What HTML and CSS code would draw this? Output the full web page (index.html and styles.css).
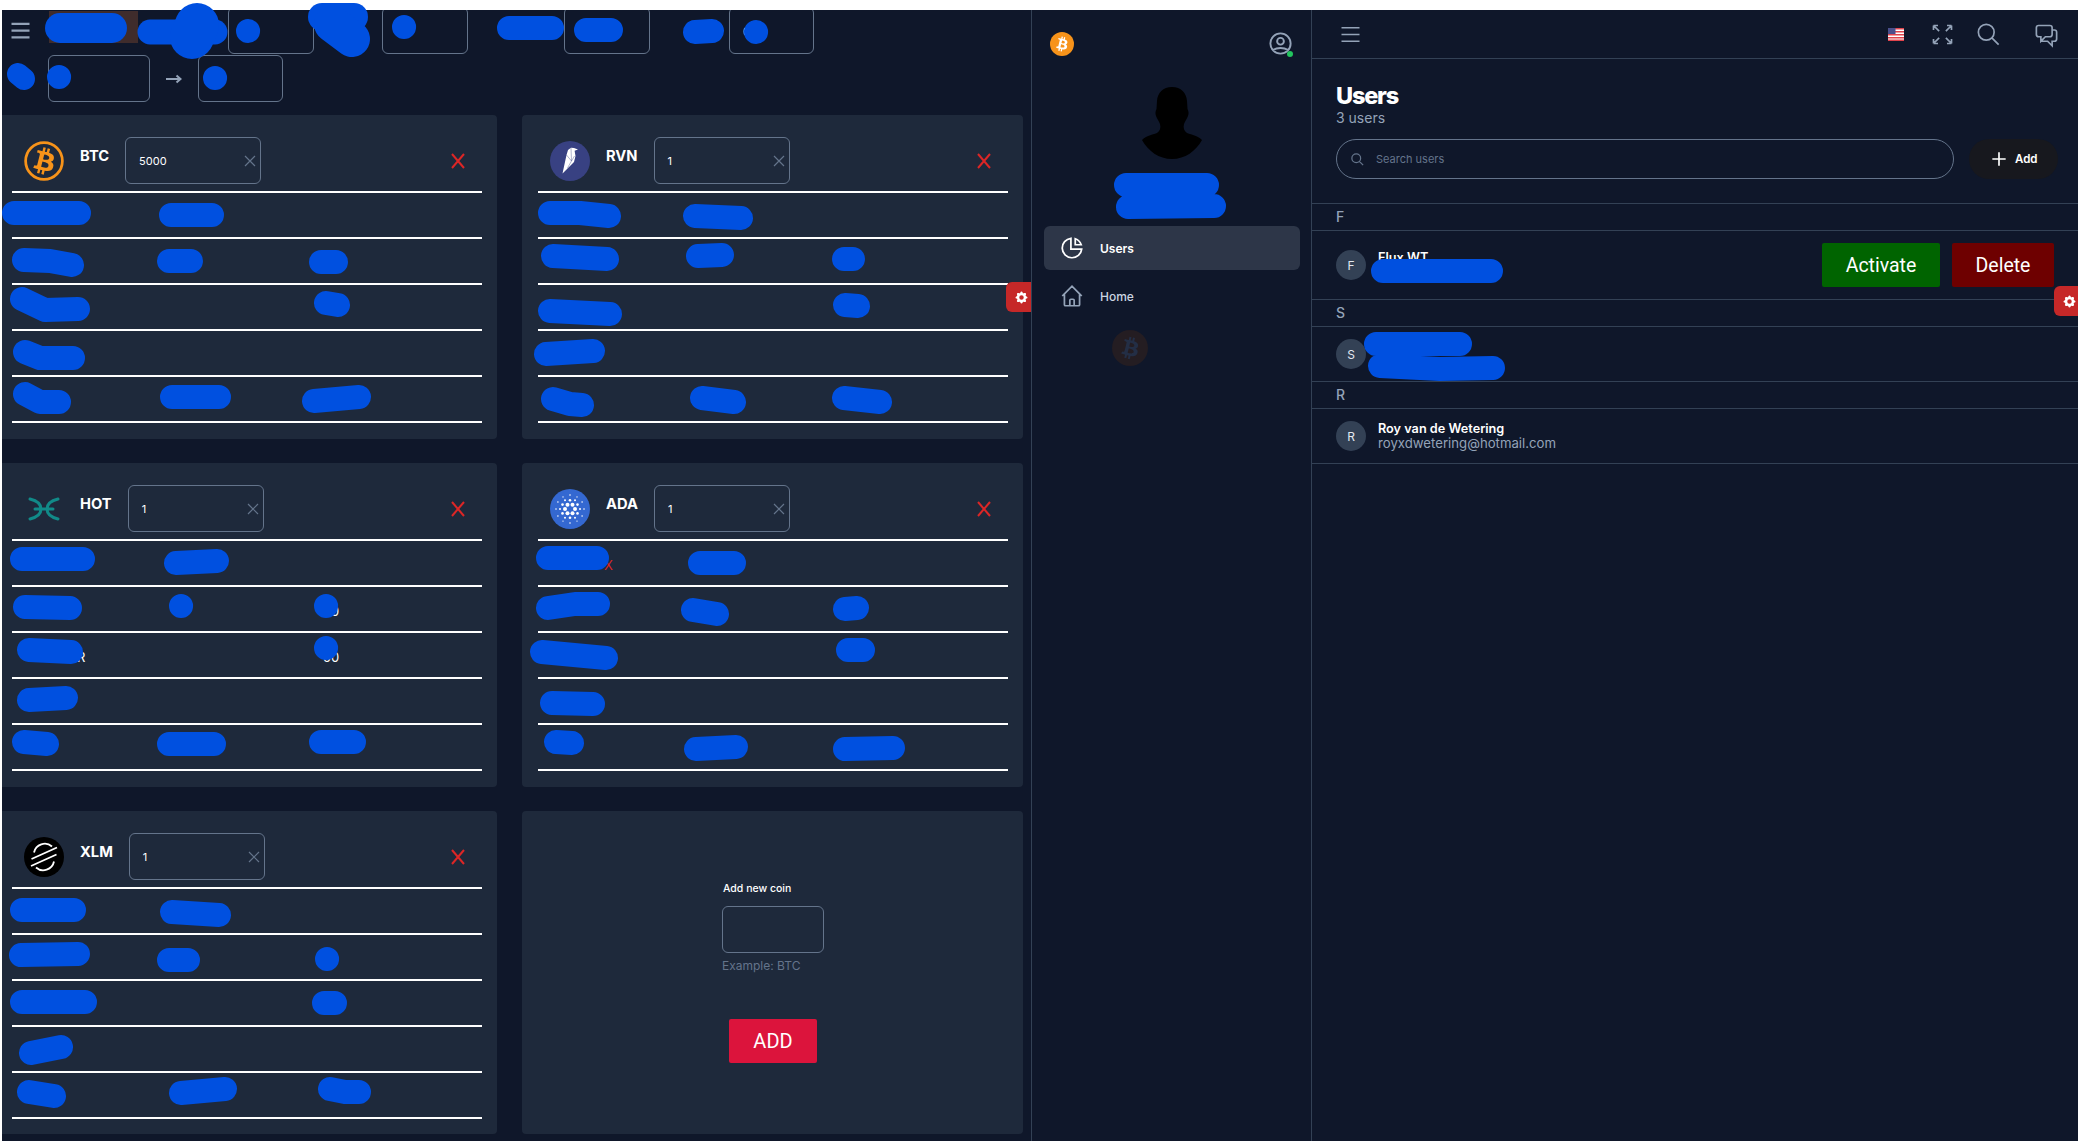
FILE: index.html
```html
<!DOCTYPE html>
<html lang="en">
<head>
    <meta charset="UTF-8">
    <meta name="viewport" content="width=device-width, initial-scale=1.0">
    <title>Users</title>
    <link rel="stylesheet" href="styles.css">
</head>
<body>
    <svg class="sprite" width="0" height="0">
        <symbol id="i-btc" viewBox="0 0 32 32"><path d="M23.189 14.02c.314-2.096-1.283-3.223-3.465-3.975l.708-2.84-1.728-.43-.69 2.765c-.454-.114-.92-.22-1.385-.326l.695-2.783L15.596 6l-.708 2.839c-.376-.086-.746-.17-1.104-.26l.002-.009-2.384-.595-.46 1.846s1.283.294 1.256.312c.7.175.826.638.805 1.006l-.806 3.235c.048.012.11.03.18.057l-.183-.045-1.13 4.532c-.086.212-.303.531-.793.41.018.025-1.256-.313-1.256-.313l-.858 1.978 2.25.561c.418.105.828.215 1.231.318l-.715 2.872 1.727.43.708-2.84c.472.127.93.245 1.378.357l-.706 2.828 1.728.43.715-2.866c2.948.558 5.164.333 6.097-2.333.752-2.146-.037-3.385-1.588-4.192 1.13-.26 1.98-1.003 2.207-2.538zm-3.95 5.538c-.533 2.147-4.148.986-5.32.695l.95-3.805c1.172.293 4.929.872 4.37 3.11zm.535-5.569c-.487 1.953-3.495.96-4.47.717l.86-3.45c.975.243 4.118.696 3.61 2.733z"/></symbol>
        <symbol id="i-gear" viewBox="0 0 20 20"><path fill-rule="evenodd" d="M11.49 3.17c-.38-1.56-2.6-1.56-2.98 0a1.532 1.532 0 01-2.286.948c-1.372-.836-2.942.734-2.106 2.106.54.886.061 2.042-.947 2.287-1.561.379-1.561 2.6 0 2.978a1.532 1.532 0 01.947 2.287c-.836 1.372.734 2.942 2.106 2.106a1.532 1.532 0 012.287.947c.379 1.561 2.6 1.561 2.978 0a1.533 1.533 0 012.287-.947c1.372.836 2.942-.734 2.106-2.106a1.533 1.533 0 01.947-2.287c1.561-.379 1.561-2.6 0-2.978a1.532 1.532 0 01-.947-2.287c.836-1.372-.734-2.942-2.106-2.106a1.532 1.532 0 01-2.287-.947zM10 13a3 3 0 100-6 3 3 0 000 6z"/></symbol>
        <symbol id="i-menu" viewBox="0 0 24 24"><path d="M4 6h16M4 12h16M4 18h16"/></symbol>
        <symbol id="i-clear" viewBox="0 0 12 12"><path d="M1 1l10 10M11 1L1 11"/></symbol>
        <symbol id="i-remove" viewBox="0 0 16 16"><path d="M2 1l12 14M14 1L2 15"/></symbol>
        <symbol id="i-search" viewBox="0 0 24 24"><path d="M21 21l-6-6m2-5a7 7 0 11-14 0 7 7 0 0114 0z"/></symbol>
    </svg>

    <div class="screen">
        <!-- coin alerts panel -->
        <section class="coins-panel">
            <div class="filters">
                <div class="filter-row">
                    <svg class="menu-icon"><use href="#i-menu"/></svg>
                    <span></span>
                    <div class="filter-active"></div>
                    <span></span>
                    <div class="field"></div>
                    <span></span>
                    <div class="field"></div>
                    <span></span>
                    <div class="field"></div>
                    <span></span>
                    <div class="field"><span class="field-peek">0</span></div>
                </div>
                <div class="filter-range">
                    <span class="range-label"></span>
                    <div class="field range-from"></div>
                    <svg class="range-arrow" viewBox="0 0 16 10"><path d="M0 5h14M10.5 1.5L14.5 5l-4 3.5"/></svg>
                    <div class="field range-to"></div>
                </div>
            </div>

            <div class="coin-grid">
                <article class="coin-card">
                    <header class="coin-head">
                        <svg class="coin-icon icon-btc" viewBox="0 0 32 32"><circle cx="16" cy="16" r="14.700"/><use href="#i-btc" transform="translate(-1.600 -1.600) scale(1.100)"/></svg>
                        <h3>BTC</h3>
                        <div class="amount"><span>5000</span><svg class="clear"><use href="#i-clear"/></svg></div>
                        <svg class="remove"><use href="#i-remove"/></svg>
                    </header>
                    <div class="coin-row"></div>
                    <div class="coin-row"></div>
                    <div class="coin-row"></div>
                    <div class="coin-row"></div>
                    <div class="coin-row"></div>
                </article>

                <article class="coin-card">
                    <header class="coin-head">
                        <svg class="coin-icon" viewBox="0 0 40 40">
                            <circle cx="20" cy="20" r="20" fill="#384182"/>
                            <path fill="#fff" d="M12.5 32.5L16.5 14l1.5-5 3-2.2 3 .2 4 1.4-3.4 1.4.9 5.2-1.5 6-6 6z"/>
                            <path fill="none" stroke="#384182" stroke-width=".4" d="M16.5 14l5 6-4 7M21 7l.5 13 3-5"/>
                        </svg>
                        <h3>RVN</h3>
                        <div class="amount"><span>1</span><svg class="clear"><use href="#i-clear"/></svg></div>
                        <svg class="remove"><use href="#i-remove"/></svg>
                    </header>
                    <div class="coin-row"></div>
                    <div class="coin-row"></div>
                    <div class="coin-row"></div>
                    <div class="coin-row"></div>
                    <div class="coin-row"></div>
                </article>

                <article class="coin-card">
                    <header class="coin-head">
                        <svg class="coin-icon icon-hot" viewBox="0 0 40 40"><path d="M6 10c8 2 11 6 11 10s-3 8-11 10M34 10c-8 2-11 6-11 10s3 8 11 10M11 20h18"/></svg>
                        <h3>HOT</h3>
                        <div class="amount"><span>1</span><svg class="clear"><use href="#i-clear"/></svg></div>
                        <svg class="remove"><use href="#i-remove"/></svg>
                    </header>
                    <div class="coin-row"></div>
                    <div class="coin-row"><span class="peek peek-three">0</span></div>
                    <div class="coin-row"><span class="peek peek-one">R</span><span class="peek peek-three-wide">50</span></div>
                    <div class="coin-row"></div>
                    <div class="coin-row"></div>
                </article>

                <article class="coin-card">
                    <header class="coin-head">
                        <svg class="coin-icon icon-ada" viewBox="0 0 40 40">
                            <circle class="ada-disc" cx="20" cy="20" r="20"/>
                            <g class="ada-big"><circle cx="25" cy="20" r="2"/><circle cx="22.5" cy="24.3" r="2"/><circle cx="17.5" cy="24.3" r="2"/><circle cx="15" cy="20" r="2"/><circle cx="17.5" cy="15.7" r="2"/><circle cx="22.5" cy="15.7" r="2"/></g>
                            <g class="ada-mid"><circle cx="27.5" cy="15.6" r="1.3"/><circle cx="27.5" cy="24.4" r="1.3"/><circle cx="12.5" cy="15.6" r="1.3"/><circle cx="12.5" cy="24.4" r="1.3"/><circle cx="20" cy="11.3" r="1.3"/><circle cx="20" cy="28.7" r="1.3"/></g>
                            <g class="ada-small"><circle cx="30" cy="20" r="1"/><circle cx="25" cy="28.7" r="1"/><circle cx="15" cy="28.7" r="1"/><circle cx="10" cy="20" r="1"/><circle cx="15" cy="11.3" r="1"/><circle cx="25" cy="11.3" r="1"/><circle cx="34" cy="20" r=".8"/><circle cx="6" cy="20" r=".8"/><circle cx="32.1" cy="13" r=".8"/><circle cx="32.1" cy="27" r=".8"/><circle cx="7.9" cy="13" r=".8"/><circle cx="7.9" cy="27" r=".8"/><circle cx="20" cy="6" r=".8"/><circle cx="20" cy="34" r=".8"/><circle cx="27" cy="7.9" r=".7"/><circle cx="13" cy="7.9" r=".7"/><circle cx="27" cy="32.1" r=".7"/><circle cx="13" cy="32.1" r=".7"/></g>
                        </svg>
                        <h3>ADA</h3>
                        <div class="amount"><span>1</span><svg class="clear"><use href="#i-clear"/></svg></div>
                        <svg class="remove"><use href="#i-remove"/></svg>
                    </header>
                    <div class="coin-row"><span class="peek peek-one peek-red">X</span></div>
                    <div class="coin-row"></div>
                    <div class="coin-row"></div>
                    <div class="coin-row"></div>
                    <div class="coin-row"></div>
                </article>

                <article class="coin-card">
                    <header class="coin-head">
                        <svg class="coin-icon icon-xlm" viewBox="0 0 40 40">
                            <circle class="xlm-disc" cx="20" cy="20" r="20"/>
                            <path d="M10 15.500a11 11 0 0 1 18-6M30 24.500a11 11 0 0 1-18 6M7.500 22L33 10.500M7 29l25.500-11.500"/>
                        </svg>
                        <h3>XLM</h3>
                        <div class="amount"><span>1</span><svg class="clear"><use href="#i-clear"/></svg></div>
                        <svg class="remove"><use href="#i-remove"/></svg>
                    </header>
                    <div class="coin-row"></div>
                    <div class="coin-row"></div>
                    <div class="coin-row"></div>
                    <div class="coin-row"></div>
                    <div class="coin-row"></div>
                </article>

                <article class="coin-card add-card">
                    <label class="add-label">Add new coin</label>
                    <div class="field add-field"></div>
                    <p class="add-hint">Example: BTC</p>
                    <button class="add-button">ADD</button>
                </article>
            </div>

            <button class="gear-tab"><svg><use href="#i-gear"/></svg></button>
        </section>

        <!-- sidebar -->
        <aside class="sidebar">
            <div class="side-top">
                <svg class="side-logo" viewBox="0 0 32 32"><circle cx="16" cy="16" r="16"/><use href="#i-btc"/></svg>
                <div class="side-account">
                    <svg viewBox="0 0 24 24"><path d="M5.121 17.804A13.937 13.937 0 0112 16c2.5 0 4.847.655 6.879 1.804M15 10a3 3 0 11-6 0 3 3 0 016 0zm6 2a9 9 0 11-18 0 9 9 0 0118 0z"/></svg>
                    <span class="online-dot"></span>
                </div>
            </div>
            <svg class="side-avatar" viewBox="0 0 60 72"><path d="M30 0c9 0 14.500 6 15 14l.5 8c1 2 1.500 4 .5 7-1 3-3 5-4 8-1 4 0 7 3 9 3 1.500 10 2 15 7-6 11-17 19-30 19S6 64 0 53c5-5 12-5.500 15-7 3-2 4-5 3-9-1-3-3-5-4-8-1-3-.5-5 .5-7l.5-8C15.500 6 21 0 30 0z"/></svg>
            <nav class="side-nav">
                <a class="side-link active" href="#">
                    <svg viewBox="0 0 24 24"><path d="M11 3.055A9.001 9.001 0 1020.945 13H11V3.055z"/><path d="M20.488 9H15V3.512A9.025 9.025 0 0120.488 9z"/></svg>
                    Users
                </a>
                <a class="side-link" href="#">
                    <svg viewBox="0 0 24 24"><path d="M3 12l2-2m0 0l7-7 7 7M5 10v10a1 1 0 001 1h3m10-11l2 2m-2-2v10a1 1 0 01-1 1h-3m-6 0a1 1 0 001-1v-4a1 1 0 011-1h2a1 1 0 011 1v4a1 1 0 001 1m-6 0h6"/></svg>
                    Home
                </a>
            </nav>
            <svg class="side-coin" viewBox="0 0 32 32"><circle cx="16" cy="16" r="16"/><use href="#i-btc"/></svg>
        </aside>

        <!-- users list -->
        <main class="users">
            <header class="topbar">
                <svg class="top-menu"><use href="#i-menu"/></svg>
                <div class="top-icons">
                    <span class="top-icon">
                        <svg class="flag" viewBox="0 0 16 13">
                            <rect width="16" height="13" fill="#fff"/>
                            <path fill="#e0434b" d="M0 0h16v1.500H0zM0 3h16v1.500H0zM0 6h16v1.500H0zM0 9h16v1.500H0zM0 11.500h16V13H0z"/>
                            <rect width="7.500" height="6" fill="#4a4f8c"/>
                        </svg>
                    </span>
                    <span class="top-icon"><svg viewBox="0 0 24 24"><path d="M4 8V4m0 0h4M4 4l5 5m11-1V4m0 0h-4m4 0l-5 5M4 16v4m0 0h4m-4 0l5-5m11 5l-5-5m5 5v-4m0 4h-4"/></svg></span>
                    <span class="top-icon"><svg><use href="#i-search"/></svg></span>
                    <span class="top-icon top-chat"><svg viewBox="0 0 24 24"><path d="M17 8h2a2 2 0 012 2v6a2 2 0 01-2 2h-2v4l-4-4H9a1.994 1.994 0 01-1.414-.586m0 0L11 14h4a2 2 0 002-2V6a2 2 0 00-2-2H5a2 2 0 00-2 2v6a2 2 0 002 2h2v4l.586-.586z"/></svg></span>
                </div>
            </header>

            <div class="users-head">
                <h1>Users</h1>
                <p>3 users</p>
                <div class="users-tools">
                    <div class="user-search">
                        <svg><use href="#i-search"/></svg>
                        <span>Search users</span>
                    </div>
                    <button class="add-user">
                        <svg viewBox="0 0 24 24"><path d="M12 4v16m8-8H4"/></svg>
                        Add
                    </button>
                </div>
            </div>

            <div class="letter">F</div>
            <div class="user-row user-row-tall">
                <span class="initial">F</span>
                <div class="user-text">
                    <div class="user-name">Flux WT</div>
                    <div class="user-mail">&nbsp;</div>
                </div>
                <div class="user-actions">
                    <button class="btn btn-green">Activate</button>
                    <button class="btn btn-red">Delete</button>
                </div>
            </div>

            <div class="letter">S</div>
            <div class="user-row">
                <span class="initial">S</span>
            </div>

            <div class="letter">R</div>
            <div class="user-row user-row-last">
                <span class="initial">R</span>
                <div class="user-text">
                    <div class="user-name">Roy van de Wetering</div>
                    <div class="user-mail">royxdwetering@hotmail.com</div>
                </div>
            </div>

            <button class="gear-tab gear-tab-main"><svg><use href="#i-gear"/></svg></button>
        </main>
    </div>

    <!-- marker scribbles painted over the private values -->
    <svg class="scribbles" viewBox="0 0 2078 1141">
        <!-- top filters -->
        <path stroke-width="30" d="M60 28H112"/>
        <path stroke-width="25" d="M150 32H215"/>
        <path stroke-width="44" d="M197 25L192 37"/>
        <path stroke-width="24" d="M248 31h.1M404 27h.1M59 77h.1M215 78h.1M756 32h.1M509 28H552M586 30H611M695 32L712 31"/>
        <path stroke-width="28" d="M322 17H354"/>
        <path stroke-width="36" d="M332 24L352 39"/>
        <path stroke-width="22" d="M18 74L24 79"/>
        <!-- btc -->
        <path d="M14 213H79M171 215H212M24 260L50 261L72 265M169 261H191M321 262H336M22 299L45 310L78 309M326 303L338 305M25 352L40 358L73 358M25 394L40 402L59 402M172 397H219M314 401L359 397"/>
        <!-- rvn -->
        <path d="M550 213L580 213L609 216M695 216L741 218M553 256L607 259M698 256L722 255M844 259L853 259M550 311L610 314M845 305L858 306M546 354L593 351M553 399L570 404L582 405M702 398L734 402M844 398L880 402"/>
        <!-- hot -->
        <path d="M22 559H83M176 563L217 561M25 607L70 608M181 606h.1M326 606h.1M29 650L71 652M326 648h.1M29 700L66 698M24 742L47 744M169 744H214M321 742H354"/>
        <!-- ada -->
        <path d="M548 558H597M700 563H734M548 608L575 604L598 604M693 610L717 614M845 609L857 608M542 652L606 658M848 650H863M552 703L593 704M556 742L572 743M696 749L736 747M845 749L893 748"/>
        <!-- xlm -->
        <path d="M22 910H74M172 912L219 915M21 955L78 954M169 960H188M327 959h.1M22 1002H85M324 1003H335M31 1053L61 1047M29 1092L54 1096M181 1093L225 1089M330 1089L345 1092L359 1092"/>
        <!-- sidebar name, user rows -->
        <path d="M1126 185H1207M1128 207L1214 206M1383 271H1491M1376 344H1460M1380 366L1440 369L1493 368"/>
    </svg>
</body>
</html>
```

FILE: styles.css
```css
* {
    box-sizing: border-box;
}

body {
    margin: 0;
    position: relative;
    height: 1141px;
    overflow: hidden;
    background: #fff;
    font-family: Inter, "Noto Sans", sans-serif;
    color: #fff;
}

button {
    border: 0;
    font-family: inherit;
    color: inherit;
}

h1, h3, p {
    margin: 0;
}

.sprite {
    position: absolute;
}

.screen {
    display: flex;
    height: 1131px;
    margin: 10px 0 0 2px;
    background: #0f172a;
}

/* Coin panel */
.coins-panel {
    position: relative;
    width: 1029px;
    overflow: hidden;
}

.filters {
    display: flow-root;
    height: 105px;
}

.filter-row {
    display: grid;
    grid-template-columns: 18px 20px 89px 90px 86px 68px 86px 96px 86px 79px 85px;
    align-items: center;
    height: 47px;
    margin-top: -3px;
    padding-left: 9px;
}

.menu-icon {
    width: 27px;
    height: 27px;
    margin-left: -4px;
    fill: none;
    stroke: #94a3b8;
    stroke-width: 2;
}

.filter-active {
    height: 32px;
    margin-top: -7px;
    background: #3f2c2c;
}

.field {
    height: 47px;
    border: 1px solid #64748b;
    border-radius: 6px;
}

.field-peek {
    display: block;
    padding: 16px 0 0 13px;
    font-size: 12px;
}

.filter-range {
    display: flex;
    align-items: center;
    margin-top: 1px;
}

.range-label {
    width: 46px;
}

.range-from {
    width: 102px;
}

.range-arrow {
    width: 16px;
    height: 10px;
    margin: 0 16px;
    fill: none;
    stroke: #94a3b8;
    stroke-width: 2;
}

.range-to {
    width: 85px;
}

.coin-grid {
    display: grid;
    grid-template-columns: 501px 501px;
    grid-template-rows: 324px 324px 323px;
    gap: 24px 25px;
    margin-left: -6px;
}

.coin-card {
    padding: 0 15px 0 16px;
    background: #1e293b;
    border-radius: 4px;
}

.coin-head {
    display: flex;
    align-items: center;
    height: 78px;
    padding: 22px 0 7px 12px;
    border-bottom: 2px solid #fff;
}

.coin-icon {
    flex: none;
    width: 40px;
    height: 40px;
    margin-right: 16px;
}

.coin-head h3 {
    margin: 0 16px 10px 0;
    font-size: 14.7px;
    font-weight: 700;
}

.amount {
    display: flex;
    justify-content: space-between;
    align-items: center;
    width: 136px;
    height: 47px;
    padding: 0 4px 0 13px;
    border: 1px solid #64748b;
    border-radius: 6px;
    font-size: 11px;
}

.clear {
    width: 12px;
    height: 12px;
    fill: none;
    stroke: #64748b;
    stroke-width: 1.2;
}

.remove {
    width: 16px;
    height: 16px;
    margin: 0 16px 0 auto;
    fill: none;
    stroke: #dc2626;
    stroke-width: 2;
}

.coin-row {
    display: grid;
    grid-template-columns: 146px 148px 1fr;
    align-items: center;
    height: 46px;
    border-bottom: 2px solid #fff;
    font-size: 13px;
}

.peek {
    padding-top: 3px;
}

.peek-one {
    grid-column: 1;
    padding-left: 65px;
}

.peek-three {
    grid-column: 3;
    padding-left: 25px;
}

.peek-three-wide {
    grid-column: 3;
    padding-left: 17px;
}

.peek-red {
    color: #dc2626;
    padding-left: 66px;
}

.icon-btc circle {
    fill: none;
    stroke: #f7931a;
    stroke-width: 2.2;
}

.icon-btc use {
    fill: #f7931a;
}

.icon-hot path {
    fill: none;
    stroke: #118a88;
    stroke-width: 3;
    stroke-linecap: round;
}

.ada-disc {
    fill: #3468d1;
}

.ada-big, .ada-mid, .ada-small {
    fill: #fff;
}

.xlm-disc {
    fill: #000;
}

.icon-xlm path {
    fill: none;
    stroke: #fff;
    stroke-width: 1.8;
}

.add-card {
    display: flex;
    flex-direction: column;
    align-items: center;
    justify-content: center;
}

.add-label {
    align-self: flex-start;
    margin: 0 0 11px 185px;
    font-size: 10.5px;
    font-weight: 500;
}

.add-field {
    width: 102px;
}

.add-hint {
    align-self: flex-start;
    margin: 5px 0 46px 184px;
    font-size: 12px;
    color: #64748b;
}

.add-button {
    width: 88px;
    height: 44px;
    background: #dc143c;
    border-radius: 2px;
    font-family: Roboto, sans-serif;
    font-size: 20px;
}

.gear-tab {
    position: absolute;
    top: 272px;
    right: -5px;
    display: flex;
    align-items: center;
    justify-content: center;
    width: 30px;
    height: 30px;
    padding: 0;
    background: #c62828;
    border-radius: 6px 0 0 6px;
}

.gear-tab-main {
    top: 276px;
    right: -6px;
}

.gear-tab svg {
    width: 15px;
    height: 15px;
    fill: #fff;
}

/* Sidebar */
.sidebar {
    flex: none;
    width: 281px;
    border-left: 1px solid #334155;
    border-right: 1px solid #334155;
}

.side-top {
    display: flex;
    justify-content: space-between;
    align-items: center;
    padding: 20px 17px 0 18px;
}

.side-logo {
    width: 24px;
    height: 24px;
}

.side-logo circle {
    fill: #f7931a;
}

.side-logo use {
    fill: #fff;
}

.side-account {
    position: relative;
    width: 27px;
    height: 27px;
}

.side-account svg {
    width: 27px;
    height: 27px;
    fill: none;
    stroke: #94a3b8;
    stroke-width: 1.7;
}

.online-dot {
    position: absolute;
    right: 1px;
    bottom: 0;
    width: 6px;
    height: 6px;
    background: #22c55e;
    border-radius: 50%;
}

.side-avatar {
    display: block;
    width: 60px;
    height: 72px;
    margin: 30px auto 67px;
    fill: #000;
}

.side-nav {
    display: flex;
    flex-direction: column;
    gap: 4px;
    padding: 0 11px 0 12px;
}

.side-link {
    display: flex;
    align-items: center;
    gap: 15px;
    height: 44px;
    padding-left: 15px;
    border-radius: 6px;
    color: #cbd5e1;
    font-size: 12px;
    font-weight: 500;
    text-decoration: none;
}

.side-link svg {
    width: 26px;
    height: 26px;
    fill: none;
    stroke: #94a3b8;
    stroke-width: 1.6;
}

.side-link.active {
    background: #2d3648;
    color: #fff;
    font-weight: 600;
}

.side-link.active svg {
    stroke: #fff;
}

.side-coin {
    display: block;
    width: 36px;
    height: 36px;
    margin: 12px 0 0 80px;
}

.side-coin circle {
    fill: #241d22;
}

.side-coin use {
    fill: #232e45;
}

/* Users list */
.users {
    position: relative;
    flex: 1;
    overflow: hidden;
}

.topbar {
    display: flex;
    justify-content: space-between;
    align-items: center;
    height: 49px;
    padding-left: 25px;
    border-bottom: 1px solid #334155;
}

.top-menu {
    width: 27px;
    height: 27px;
    fill: none;
    stroke: #94a3b8;
    stroke-width: 1.5;
}

.top-icons {
    display: flex;
    padding-right: 9px;
}

.top-icon {
    display: flex;
    align-items: center;
    justify-content: center;
    width: 46px;
}

.top-icon svg {
    width: 27px;
    height: 27px;
    fill: none;
    stroke: #94a3b8;
    stroke-width: 1.5;
}

.top-icon .flag {
    width: 16px;
    height: 13px;
    stroke: none;
}

.top-chat {
    margin-left: 12px;
}

.users-head {
    padding: 25px 20px 24px 24px;
}

.users-head h1 {
    font-size: 23.5px;
    line-height: 24px;
    font-weight: 800;
    letter-spacing: -1.2px;
}

.users-head p {
    font-size: 14px;
    line-height: 19px;
    color: #94a3b8;
}

.users-tools {
    display: flex;
    gap: 15px;
    margin-top: 12px;
}

.user-search {
    flex: 1;
    display: flex;
    align-items: center;
    gap: 11px;
    height: 40px;
    padding-left: 13px;
    border: 1px solid #64748b;
    border-radius: 20px;
    font-size: 11px;
    color: #64748b;
}

.user-search svg {
    width: 15px;
    height: 15px;
    fill: none;
    stroke: #64748b;
    stroke-width: 2;
}

.add-user {
    display: flex;
    align-items: center;
    width: 89px;
    height: 40px;
    padding: 0 0 0 20px;
    gap: 6px;
    background: #17181e;
    border-radius: 20px;
    font-size: 11.5px;
    font-weight: 600;
}

.add-user svg {
    width: 20px;
    height: 20px;
    fill: none;
    stroke: #fff;
    stroke-width: 2;
}

.letter {
    height: 27px;
    padding-left: 24px;
    border-top: 1px solid #334155;
    font-size: 14px;
    font-weight: 500;
    line-height: 26px;
    color: #94a3b8;
}

.user-row {
    display: flex;
    align-items: center;
    gap: 12px;
    height: 55px;
    padding: 0 24px;
    border-top: 1px solid #334155;
}

.user-row-tall {
    height: 69px;
}

.user-row-last {
    height: 56px;
    border-bottom: 1px solid #334155;
}

.initial {
    display: flex;
    align-items: center;
    justify-content: center;
    flex: none;
    width: 30px;
    height: 30px;
    background: #334155;
    border-radius: 50%;
    font-size: 12px;
    color: #e2e8f0;
}

.user-name {
    font-size: 12.7px;
    line-height: 15px;
    font-weight: 600;
}

.user-mail {
    font-size: 13.2px;
    line-height: 15px;
    color: #94a3b8;
}

.user-actions {
    display: flex;
    gap: 12px;
    margin-left: auto;
}

.btn {
    height: 44px;
    border-radius: 2px;
    font-family: Roboto, sans-serif;
    font-size: 19.5px;
}

.btn-green {
    width: 118px;
    background: #006400;
}

.btn-red {
    width: 102px;
    background: #6e0000;
}

/* Scribbles */
.scribbles {
    position: absolute;
    top: 0;
    left: 0;
    width: 2078px;
    height: 1141px;
    pointer-events: none;
    fill: none;
    stroke: #0050e0;
    stroke-width: 24;
    stroke-linecap: round;
    stroke-linejoin: round;
}
```
